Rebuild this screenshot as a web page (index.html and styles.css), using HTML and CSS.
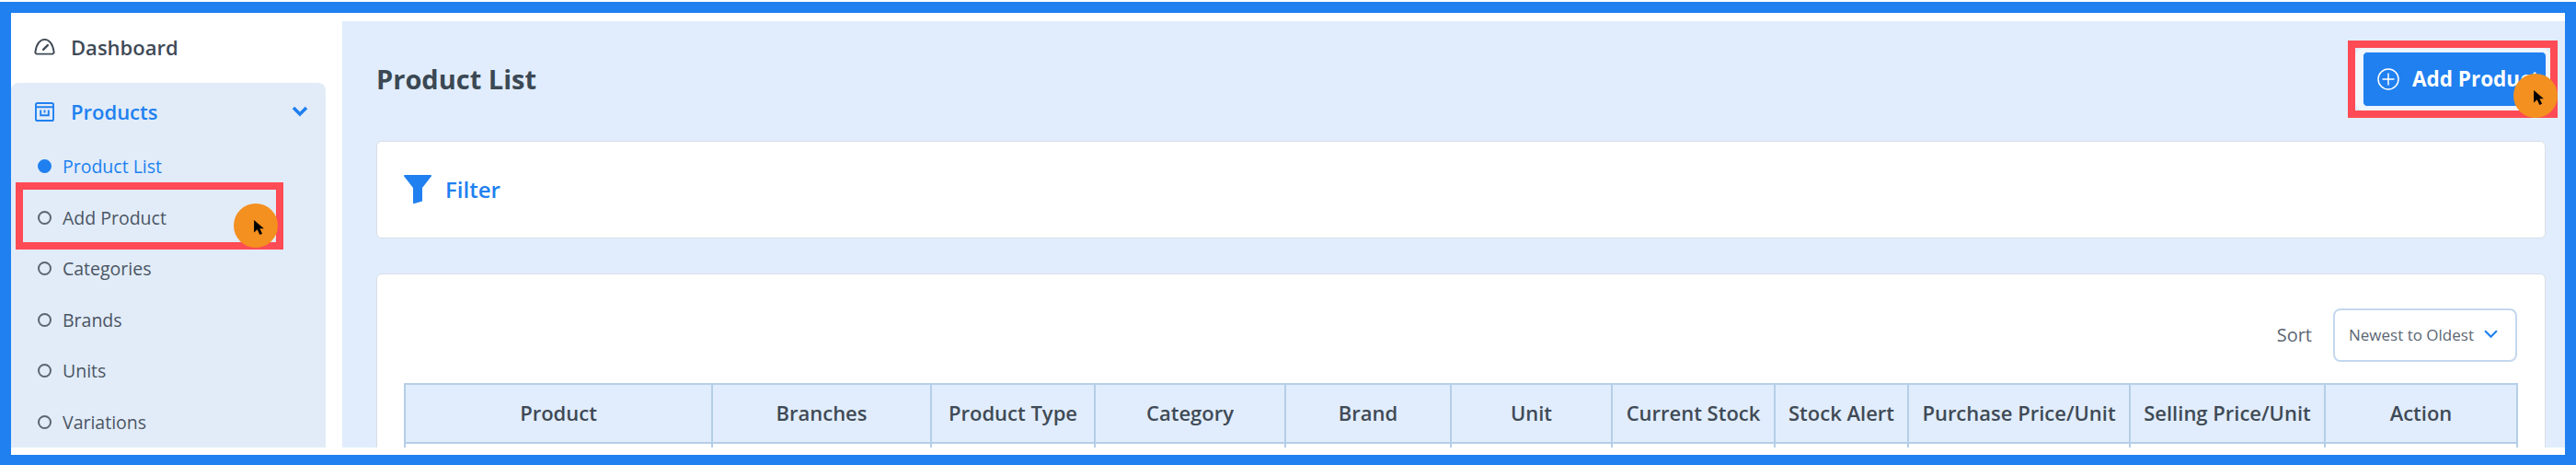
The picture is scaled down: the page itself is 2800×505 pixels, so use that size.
FILE: index.html
```html
<!DOCTYPE html>
<html>
<head>
    <meta charset="UTF-8">
    <title>Product List</title>
    <link rel="stylesheet" href="styles.css">
</head>
<body>
    <div class="frame">
        <aside class="sidebar">
            <a class="nav-top" href="#">
                <svg class="nav-icon" viewBox="0 0 24 20" fill="none" stroke="#3f4a56" stroke-width="2"><path d="M3.5 18.5h17a2 2 0 0 0 2-2.5C21.500 7 17 2 12 2S2.500 7 1.500 16a2 2 0 0 0 2 2.500z"/><path d="M10.500 13.500l5-5" stroke-linecap="round" stroke-width="2.400"/></svg>
                <span>Dashboard</span>
            </a>
            <div class="nav-group">
                <a class="nav-head" href="#">
                    <svg class="nav-icon" viewBox="0 0 22 22" fill="none" stroke="#2080f0" stroke-width="2"><rect x="1" y="1" width="20" height="20" rx="2"/><path d="M1 5.500h20"/><path d="M6.500 9v6h9V9M11 9v3"/></svg>
                    <span>Products</span>
                    <svg class="nav-caret" viewBox="0 0 18 12" fill="none" stroke="#2080f0" stroke-width="3.600"><path d="M2 2l7 7 7-7"/></svg>
                </a>
                <ul class="sub-nav">
                    <li class="active">Product List</li>
                    <li>Add Product</li>
                    <li>Categories</li>
                    <li>Brands</li>
                    <li>Units</li>
                    <li>Variations</li>
                </ul>
            </div>
            <div class="mark mark-side"></div>
            <div class="dot dot-side"><svg viewBox="0 0 14 20"><path d="M1 1v15l4-3.500 3 6.500 3-1.500-3-6h5z"/></svg></div>
        </aside>
        <main class="content">
            <div class="page-head">
                <h1>Product List</h1>
                <a class="add-btn" href="#">
                    <svg viewBox="0 0 24 24" fill="none" stroke="#fff" stroke-width="1.500"><circle cx="12" cy="12" r="11"/><path d="M12 5.500v13M5.500 12h13"/></svg>
                    Add Product
                </a>
            </div>
            <div class="card filter-card">
                <svg viewBox="0 0 30 31"><path fill="#2080f0" d="M1 0h28a1 1 0 0 1 .8 1.600L20 14v14.500L11.500 31a1 1 0 0 1-1.500-1V14L.2 1.600A1 1 0 0 1 1 0z"/></svg>
                <span>Filter</span>
            </div>
            <div class="card table-card">
                <div class="sort-row">
                    <label>Sort</label>
                    <div class="sort-select">
                        Newest to Oldest
                        <svg viewBox="0 0 14 9" fill="none" stroke="#2080f0" stroke-width="2"><path d="M1 1l6 6 6-6"/></svg>
                    </div>
                </div>
                <table>
                    <colgroup>
                        <col class="c1"><col class="c2"><col class="c3"><col class="c4"><col class="c5"><col class="c6"><col class="c7"><col class="c8"><col class="c9"><col class="c10"><col class="c11">
                    </colgroup>
                    <thead>
                        <tr>
                            <th>Product</th>
                            <th>Branches</th>
                            <th>Product Type</th>
                            <th>Category</th>
                            <th>Brand</th>
                            <th>Unit</th>
                            <th>Current Stock</th>
                            <th>Stock Alert</th>
                            <th>Purchase Price/Unit</th>
                            <th>Selling Price/Unit</th>
                            <th>Action</th>
                        </tr>
                    </thead>
                    <tbody>
                        <tr><td></td><td></td><td></td><td></td><td></td><td></td><td></td><td></td><td></td><td></td><td></td></tr>
                    </tbody>
                </table>
            </div>
            <div class="mark mark-top"></div>
            <div class="dot dot-top"><svg viewBox="0 0 14 20"><path d="M1 1v15l4-3.500 3 6.500 3-1.500-3-6h5z"/></svg></div>
        </main>
    </div>
</body>
</html>
```

FILE: styles.css
```css
html, body, h1, ul, li { margin: 0; padding: 0; }
html, body { height: 505px; overflow: hidden; background: #fff; }
body { font-family: "Open Sans", "Noto Sans", sans-serif; color: #3f4a56; padding-top: 2px; box-sizing: border-box; }
a { text-decoration: none; color: inherit; }

.frame { position: relative; display: flex; height: 503px; box-sizing: border-box; border: 12px solid #2080f0; border-bottom-width: 11px; background: #fff; padding-bottom: 8px; overflow: hidden; }

/* sidebar */
.sidebar { width: 342px; margin-right: 18px; flex: none; }
.nav-top { display: flex; align-items: center; height: 76px; padding: 0 0 3px 25px; font-size: 22px; font-weight: 600; box-sizing: border-box; }
.nav-icon { width: 23px; height: 21px; margin-right: 17px; flex: none; }
.nav-group { background: #e2ecf8; border-radius: 8px 8px 0 0; height: 396px; overflow: hidden; }
.nav-head { display: flex; align-items: center; height: 62px; padding: 0 19px 0 25px; font-size: 22px; font-weight: 600; color: #2080f0; }
.nav-caret { width: 18px; height: 12px; margin-left: auto; }
.sub-nav { list-style: none; padding: 1px 0 0; }
.sub-nav li { position: relative; height: 55.6px; line-height: 55.6px; padding-left: 56px; font-size: 19.5px; color: #4a5563; }
.sub-nav li::before { content: ""; position: absolute; left: 29px; top: 20px; width: 15px; height: 15px; box-sizing: border-box; border: 2px solid #5b6673; border-radius: 50%; }
.sub-nav li.active { color: #2080f0; }
.sub-nav li.active::before { background: #2080f0; border-color: #2080f0; }

/* main */
.content { position: relative; flex: 1; margin-top: 9px; background: #e1edfc; padding: 0 21px 0 37px; min-width: 0; overflow: hidden; }
.page-head { display: flex; justify-content: space-between; align-items: center; height: 130px; box-sizing: border-box; padding-bottom: 4px; }
.page-head h1 { font-size: 29px; font-weight: 700; color: #3b4854; padding-bottom: 2px; }
.add-btn { display: flex; align-items: center; width: 200px; height: 60px; margin-right: -1px; box-sizing: border-box; padding: 0 0 1px 15px; background: #2080f0; border: 1px solid #e8f2ff; border-radius: 5px; box-shadow: 0 0 0 4px #f1f6fd, -4px 0 0 4px #f1f6fd; color: #fff; font-size: 22.500px; font-weight: 700; white-space: nowrap; overflow: hidden; }
.add-btn svg { width: 24px; height: 24px; margin-right: 14px; flex: none; }

.card { background: #fff; border: 1px solid #d8dfe7; border-radius: 6px; box-sizing: border-box; }
.filter-card { display: flex; align-items: center; height: 106px; padding: 0 0 2px 29px; color: #2080f0; font-size: 24px; font-weight: 600; margin-bottom: 38px; }
.filter-card svg { width: 30px; height: 31px; margin-right: 15px; }
.table-card { padding: 37px 30px 0 29px; height: 260px; }
.sort-row { display: flex; justify-content: flex-end; align-items: center; gap: 23px; height: 58px; margin-bottom: 23px; }
.sort-row label { font-size: 20px; color: #5b6673; padding-bottom: 2px; }
.sort-select { display: flex; align-items: center; justify-content: space-between; width: 200px; height: 58px; box-sizing: border-box; padding: 0 19px 2px 15px; border: 2px solid #c4d8ee; border-radius: 8px; font-size: 17px; color: #5b6673; white-space: nowrap; }
.sort-select svg { width: 15px; height: 10px; }

table { border-collapse: collapse; table-layout: fixed; width: 2296px; }
th, td { border: 2px solid #b5cee8; }
th { height: 60px; background: #e1edfc; font-size: 22px; font-weight: 600; color: #3f4a56; padding: 0 0 2px; white-space: nowrap; }
td { height: 40px; }
.c1 { width: 334px; } .c2 { width: 238px; } .c3 { width: 178px; } .c4 { width: 207px; }
.c5 { width: 180px; } .c6 { width: 175px; } .c7 { width: 177px; } .c8 { width: 145px; }
.c9 { width: 241px; } .c10 { width: 212px; } .c11 { width: 209px; }

/* annotation overlays */
.mark { position: absolute; border: 8px solid #ff4b55; box-sizing: border-box; }
.mark-side { left: 5px; top: 184px; width: 291px; height: 73px; }
.mark-top { right: 8px; top: 21px; width: 228px; height: 84px; }
.dot { position: absolute; width: 48px; height: 48px; border-radius: 50%; background: #f39020; display: flex; align-items: center; justify-content: center; }
.dot svg { width: 13px; height: 18px; fill: #000; margin-left: 6px; margin-top: 3px; }
.dot-side { left: 242px; top: 207px; }
.dot-top { right: 8px; top: 57px; }
```
